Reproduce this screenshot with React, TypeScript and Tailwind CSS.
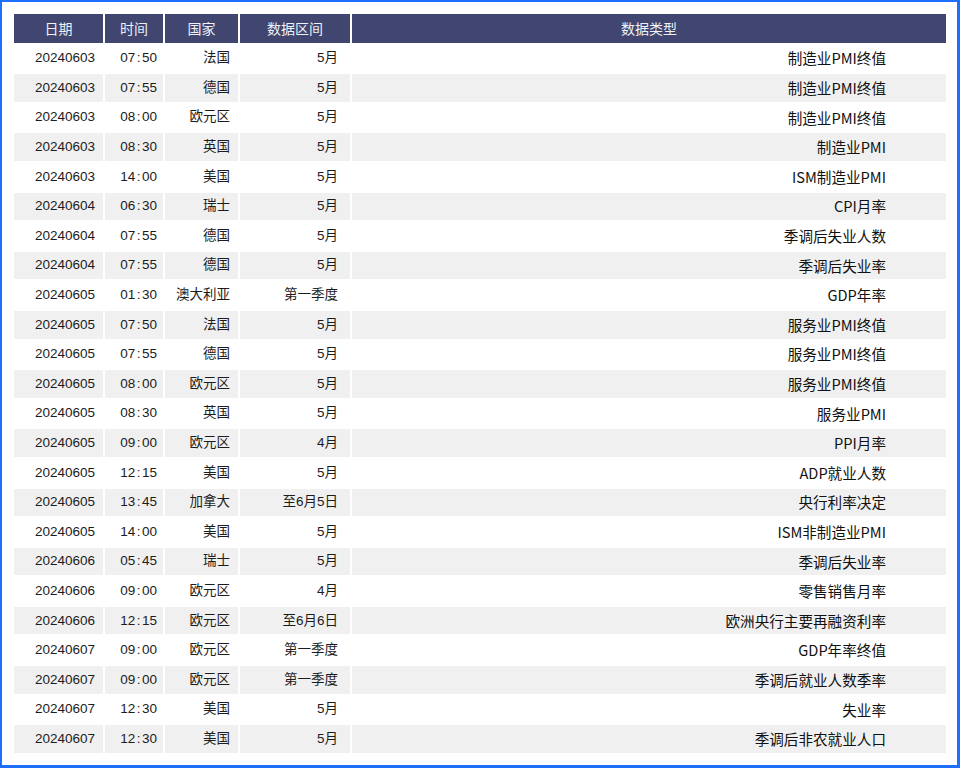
import React from "react";

type Row = [string, string, string, string, string];

const rows: Row[] = [
  ["20240603", "07:50", "法国", "5月", "制造业PMI终值"],
  ["20240603", "07:55", "德国", "5月", "制造业PMI终值"],
  ["20240603", "08:00", "欧元区", "5月", "制造业PMI终值"],
  ["20240603", "08:30", "英国", "5月", "制造业PMI"],
  ["20240603", "14:00", "美国", "5月", "ISM制造业PMI"],
  ["20240604", "06:30", "瑞士", "5月", "CPI月率"],
  ["20240604", "07:55", "德国", "5月", "季调后失业人数"],
  ["20240604", "07:55", "德国", "5月", "季调后失业率"],
  ["20240605", "01:30", "澳大利亚", "第一季度", "GDP年率"],
  ["20240605", "07:50", "法国", "5月", "服务业PMI终值"],
  ["20240605", "07:55", "德国", "5月", "服务业PMI终值"],
  ["20240605", "08:00", "欧元区", "5月", "服务业PMI终值"],
  ["20240605", "08:30", "英国", "5月", "服务业PMI"],
  ["20240605", "09:00", "欧元区", "4月", "PPI月率"],
  ["20240605", "12:15", "美国", "5月", "ADP就业人数"],
  ["20240605", "13:45", "加拿大", "至6月5日", "央行利率决定"],
  ["20240605", "14:00", "美国", "5月", "ISM非制造业PMI"],
  ["20240606", "05:45", "瑞士", "5月", "季调后失业率"],
  ["20240606", "09:00", "欧元区", "4月", "零售销售月率"],
  ["20240606", "12:15", "欧元区", "至6月6日", "欧洲央行主要再融资利率"],
  ["20240607", "09:00", "欧元区", "第一季度", "GDP年率终值"],
  ["20240607", "09:00", "欧元区", "第一季度", "季调后就业人数季率"],
  ["20240607", "12:30", "美国", "5月", "失业率"],
  ["20240607", "12:30", "美国", "5月", "季调后非农就业人口"],
];

const headers = ["日期", "时间", "国家", "数据区间", "数据类型"];

const gridCols = "grid grid-cols-[89px_58px_73px_110px_1fr] gap-x-[2px]";

function Time({ value }: { value: string }) {
  const [h, m] = value.split(":");
  return (
    <span>
      {h}
      <span className="px-[1.5px]">:</span>
      {m}
    </span>
  );
}

export default function App() {
  return (
    <div className="w-[960px] h-[768px] bg-white border-[#1f6fff] border-l-2 border-t-2 border-r-[3px] border-b-[3px] pl-[12px] pt-[12px]">
      <div className="w-[932px] flex flex-col gap-y-[2px] font-['Liberation_Sans','Noto_Sans_CJK_SC',sans-serif] text-[13.5px] text-[#1c1c1c]">
        {/* header */}
        <div className={`${gridCols} h-[28.6px]`}>
          {headers.map((h) => (
            <div
              key={h}
              className="bg-[#404670] text-[#eef0f6] text-[14px] flex items-center justify-center font-['Noto_Sans_CJK_SC',sans-serif]"
            >
              {h}
            </div>
          ))}
        </div>

        {rows.map((r, i) => {
          const bg = i % 2 === 1 ? "bg-[#f0f0f0]" : "bg-white";
          return (
            <div key={i} className={`${gridCols} h-[27.6px]`}>
              <div className={`${bg} flex items-center justify-end pr-[8px]`}>{r[0]}</div>
              <div className={`${bg} flex items-center justify-end pr-[6px]`}>
                <Time value={r[1]} />
              </div>
              <div className={`${bg} flex items-center justify-end pr-[8px]`}>{r[2]}</div>
              <div className={`${bg} flex items-center justify-end pr-[12px]`}>{r[3]}</div>
              <div
                className={`${bg} flex items-center justify-end pr-[60px] text-[14.6px] text-[#111] font-['Noto_Sans_CJK_SC',sans-serif]`}
              >
                {r[4]}
              </div>
            </div>
          );
        })}
      </div>
    </div>
  );
}
